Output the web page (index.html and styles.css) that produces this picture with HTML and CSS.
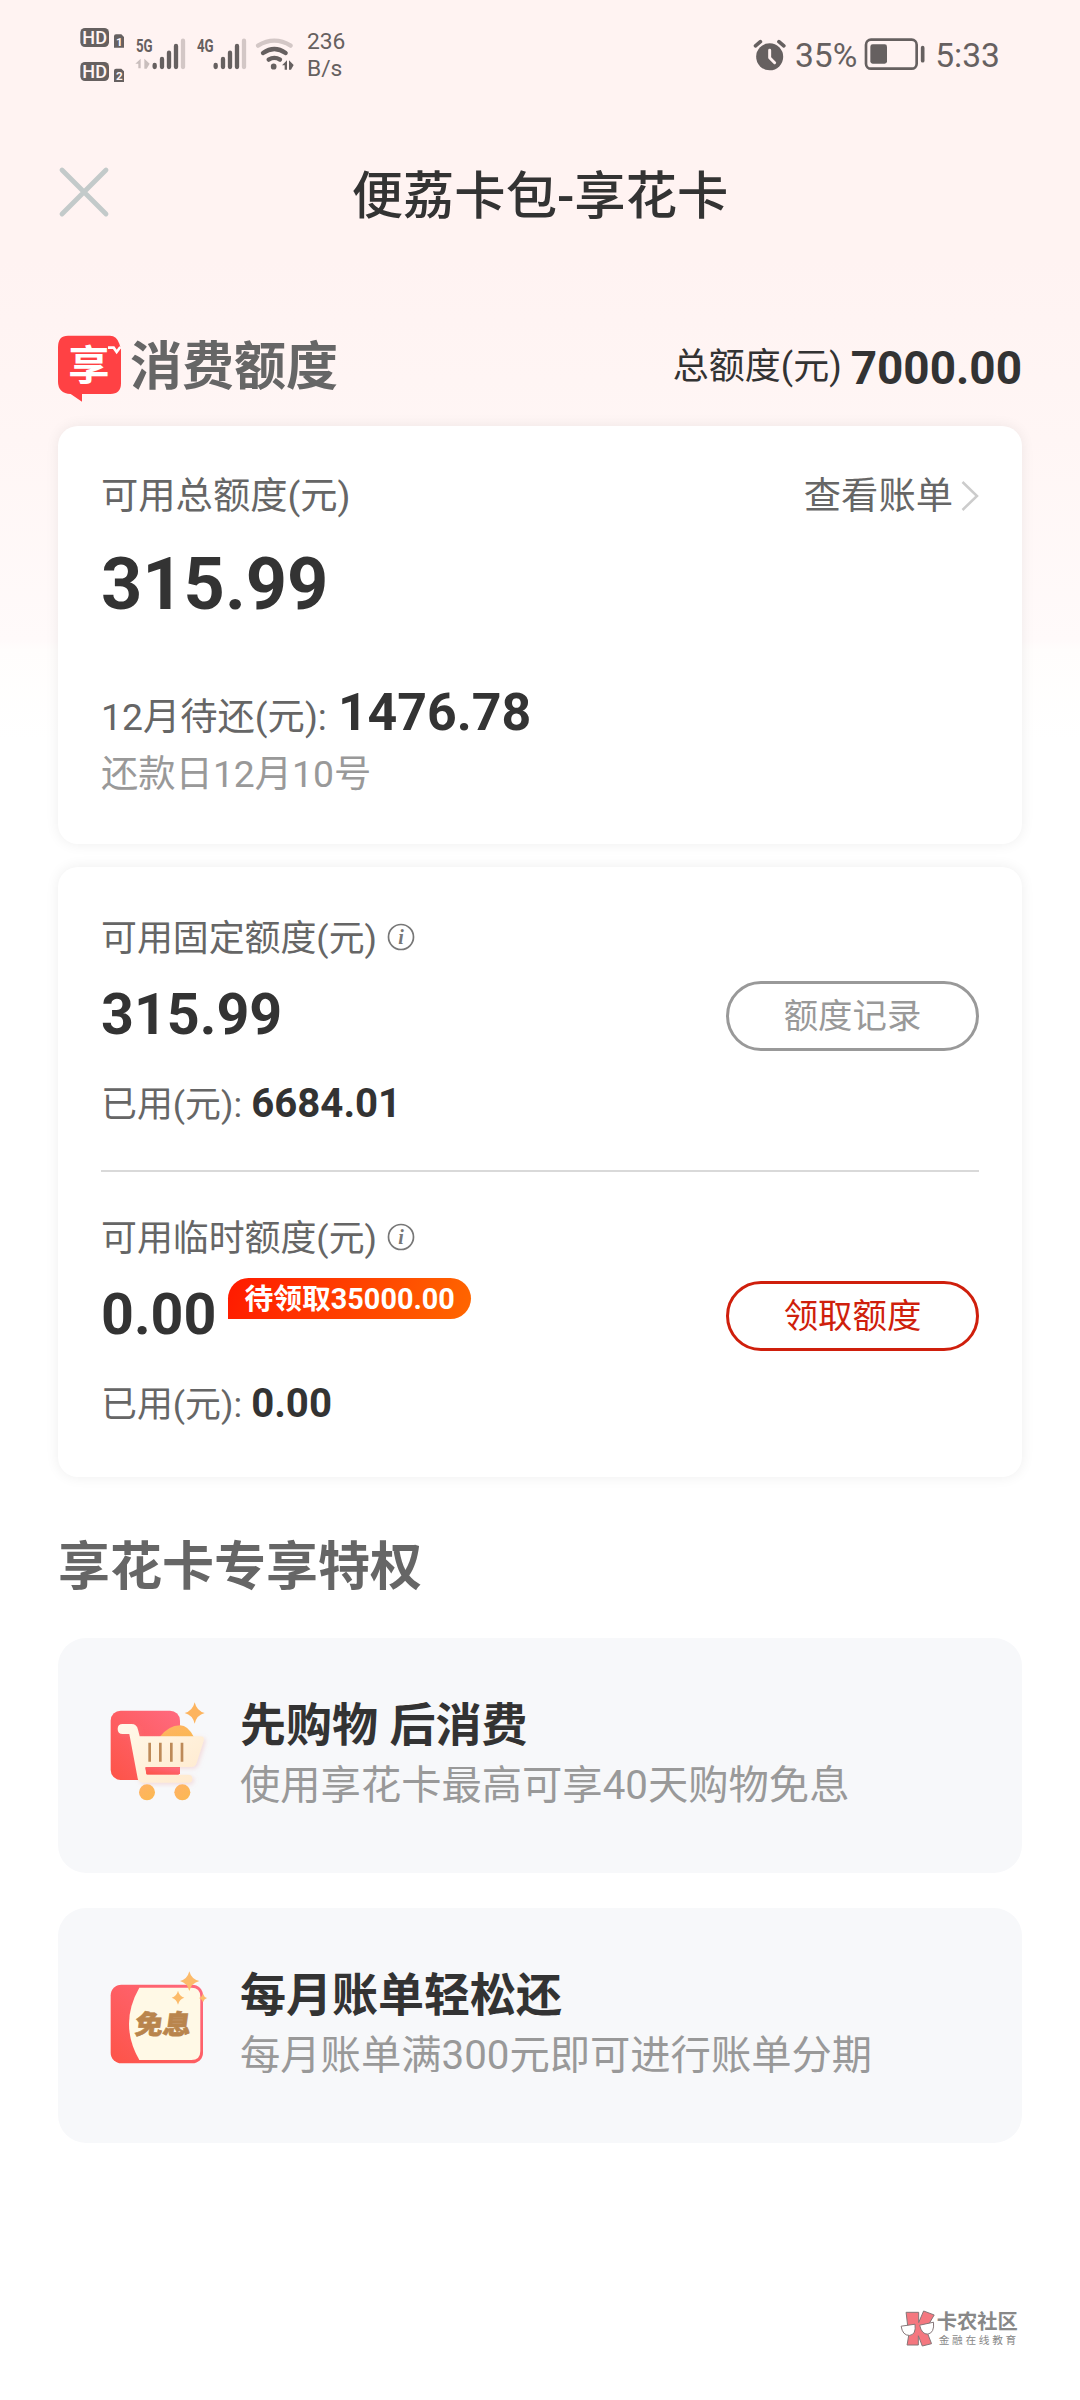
FILE: index.html
```html
<!DOCTYPE html>
<html lang="zh-CN">
<head>
<meta charset="utf-8">
<title>便荔卡包-享花卡</title>
<link rel="stylesheet" href="styles.css">
</head>
<body>
<div class="screen">
  <div class="status">
    <svg class="signals" viewBox="0 0 720 270" aria-hidden="true">
      <g fill="#666060">
        <rect x="61" y="54" width="86" height="57" rx="14"/>
        <rect x="61" y="156" width="86" height="57" rx="14"/>
        <path d="M168 73h16l8 8v32h-30V79q0-6 6-6zM168 176h16l8 8v32h-30v-34q0-6 6-6z"/>
        <text class="net" x="228" y="125" textLength="50" lengthAdjust="spacingAndGlyphs">5G</text>
        <text class="net" x="411" y="125" textLength="50" lengthAdjust="spacingAndGlyphs">4G</text>
      </g>
      <g class="hd" fill="#fff4f3">
        <text x="67" y="101" textLength="74" lengthAdjust="spacingAndGlyphs">HD</text>
        <text x="67" y="203" textLength="74" lengthAdjust="spacingAndGlyphs">HD</text>
        <text class="sim" x="168" y="107">1</text>
        <text class="sim" x="168" y="210">2</text>
      </g>
      <g fill="none" stroke="#666060" stroke-width="13" stroke-linecap="round">
        <path d="M284 165v6M306 147v24M327 128v43M348 108v63"/>
        <path d="M467 165v6M489 147v24M510 128v43M531 108v63"/>
        <path d="M369 92v79M552 92v79" stroke="#d3c7c6"/>
        <path d="M594 107q49-30 98 0" stroke="#d3c7c6"/>
        <path d="M609 129q34-24 68 0M626 149q17-11 34 0"/>
        <path d="M641 169v1" stroke-width="17"/>
      </g>
      <path fill="#c9bebd" d="M242 146v29h-7v-14h-9zM253 146l16 15-9 15h-7z"/>
      <path fill="#666060" d="M681 151v28h-7v-13h-8zM687 151l14 14-8 14h-6z"/>
    </svg>
    <div class="speed">236<br>B/s</div>
    <svg class="alarm" viewBox="70 50 102 100" aria-hidden="true">
      <circle cx="120" cy="107" r="41" fill="#666060"/>
      <path d="M77 74l15-13M163 74l-15-13" stroke="#666060" stroke-width="11" stroke-linecap="round"/>
      <path d="M120 87v23l15 15" fill="none" stroke="#fff2f1" stroke-width="9" stroke-linecap="round" stroke-linejoin="round"/>
    </svg>
    <span class="clock percent">35%</span>
    <svg class="battery" viewBox="402 52 186 102" aria-hidden="true">
      <rect x="408" y="60" width="152" height="87" rx="15" fill="none" stroke="#666060" stroke-width="8"/>
      <rect x="421" y="74" width="50" height="58" rx="7" fill="#666060"/>
      <path d="M578 84v39" stroke="#666060" stroke-width="11" stroke-linecap="round"/>
    </svg>
    <span class="clock">5:33</span>
  </div>

  <header class="header">
    <svg class="close" viewBox="0 0 52 52" aria-label="关闭"><path d="M4 4l44 44M48 4L4 48" stroke="#c3caca" stroke-width="4.8" stroke-linecap="round"/></svg>
    <h1 class="title">便荔卡包-享花卡</h1>
  </header>

  <main class="content">
    <div class="summary">
      <svg class="logo" viewBox="24 28 198 204" aria-hidden="true">
        <path fill="#ff4144" d="M54 30h126q20 0 28 24l5 17v102q0 32-32 32H96v23L62 205Q24 202 24 168V64q0-34 30-34z"/>
        <text class="logo-text" x="55" y="163">享</text>
        <path d="M174 66h17l9 13 11-15" fill="none" stroke="#fff" stroke-width="8"/>
      </svg>
      <h2 class="section-title">消费额度</h2>
      <span class="total-label">总额度(元)</span>
      <strong class="total-value">7000.00</strong>
    </div>

    <section class="card available">
      <div class="row label-row">
        <span>可用总额度(元)</span>
        <a class="bill">查看账单<svg class="chevron" viewBox="0 0 18 32" aria-hidden="true"><path d="M1.5 2L16 16 1.5 30" fill="none" stroke="#ccc" stroke-width="2.5"/></svg></a>
      </div>
      <div class="amount-xl">315.99</div>
      <div class="due"><span>12月待还(元):</span><strong>1476.78</strong></div>
      <div class="due-date">还款日12月10号</div>
    </section>

    <section class="card limits">
      <div class="limit">
        <div class="limit-label">可用固定额度(元)<svg class="info" viewBox="0 0 28 28" aria-hidden="true"><circle cx="14" cy="14" r="12.5" fill="none" stroke="#777" stroke-width="1.7"/><text x="14" y="21">i</text></svg></div>
        <div class="row limit-main">
          <span class="amount-lg">315.99</span>
          <button class="pill">额度记录</button>
        </div>
        <div class="used"><span>已用(元):</span><strong>6684.01</strong></div>
      </div>
      <div class="limit">
        <div class="limit-label">可用临时额度(元)<svg class="info" viewBox="0 0 28 28" aria-hidden="true"><circle cx="14" cy="14" r="12.5" fill="none" stroke="#777" stroke-width="1.7"/><text x="14" y="21">i</text></svg></div>
        <div class="row limit-main">
          <span class="amount-lg">0.00</span>
          <span class="badge">待领取35000.00</span>
          <button class="pill primary">领取额度</button>
        </div>
        <div class="used"><span>已用(元):</span><strong>0.00</strong></div>
      </div>
    </section>

    <h2 class="section-title perks-title">享花卡专享特权</h2>

    <section class="perk">
      <svg class="perk-icon" viewBox="30 36 330 360" aria-hidden="true">
        <defs>
          <linearGradient id="red" x1="1" y1="0" x2="0" y2="1"><stop offset="0" stop-color="#ff6a80"/><stop offset="1" stop-color="#fd5347"/></linearGradient>
          <linearGradient id="cream" x1="0" y1="0" x2="1" y2="1"><stop offset="0" stop-color="#fff9ea"/><stop offset="1" stop-color="#ffe9cd"/></linearGradient>
          <linearGradient id="gold" x1="0" y1="0" x2="1" y2="1"><stop offset="0" stop-color="#ffb266"/><stop offset="1" stop-color="#fbb950"/></linearGradient>
          <filter id="soft" x="-20%" y="-20%" width="150%" height="150%"><feDropShadow dx="5" dy="5" stdDeviation="6" flood-color="#e88c8c" flood-opacity=".28"/></filter>
        </defs>
        <rect x="62" y="92" width="208" height="208" rx="30" fill="url(#red)"/>
        <path d="M208 172q28-36 62-36 24 0 42 36z" fill="url(#gold)"/>
        <g filter="url(#soft)">
          <path fill="url(#cream)" d="M98 132h26q17 0 20 17l5 20h182q14 0 10 13l-21 66q-4 13-17 13H166l4 23h125q12 0 12 12t-12 12H160q-15 0-17-13L118 162H98q-15 0-15-15t15-15z"/>
        </g>
        <path d="M166 263h104v19H169z" fill="url(#red)"/>
        <path d="M179 188v57M211 188v57M244 188v57M276 188v57" stroke="#bd8a58" stroke-width="8"/>
        <circle cx="171" cy="337" r="24" fill="url(#gold)"/><circle cx="277" cy="337" r="24" fill="url(#gold)"/>
        <path fill="#fdb45e" d="M314 67q6 26 30 32-24 6-30 32-6-26-30-32 24-6 30-32z"/>
      </svg>
      <div class="perk-body"><h3>先购物 后消费</h3><p>使用享花卡最高可享40天购物免息</p></div>
    </section>

    <section class="perk">
      <svg class="perk-icon" viewBox="30 36 330 360" aria-hidden="true">
        <rect x="62" y="104" width="277" height="236" rx="32" fill="url(#red)"/>
        <path fill="#fff9e6" d="M148 113h156q27 0 27 27v163q0 27-27 27H148q-31-53-31-108t31-109z"/>
        <text class="free" transform="translate(132 253) skewX(-8)" textLength="168" lengthAdjust="spacingAndGlyphs">免息</text>
        <g fill="#fcbb6a">
          <path d="M298 64q6 24 30 29-24 6-30 30-6-24-28-30 22-5 28-29z"/>
          <path d="M264 122q4 17 19 21-15 4-19 21-4-17-19-21 15-4 19-21z"/>
          <path d="M339 131q3 10 12 13-9 3-12 13-3-10-12-13 9-3 12-13z"/>
        </g>
      </svg>
      <div class="perk-body"><h3>每月账单轻松还</h3><p>每月账单满300元即可进行账单分期</p></div>
    </section>
  </main>

  <footer class="brand">
    <svg class="brand-logo" viewBox="58 66 108 112" aria-hidden="true">
      <path fill="#f4777f" stroke="#857577" stroke-width="3" d="M76 73h38v31l15-35 32 12-25 43 17 44-28 7-12-31v28H79l5-30z"/>
      <path fill="#fff" stroke="#857577" stroke-width="3" d="M61 115l42-6q4 32-17 34-21 0-25-28zM117 112l42-9q3 32-17 36-19 1-25-27z"/>
    </svg>
    <div class="brand-text"><b>卡农社区</b><span>金融在线教育</span></div>
  </footer>
</div>
</body>
</html>
```
FILE: styles.css
```css
* { box-sizing: border-box; }

body {
  margin: 0;
  font-family: Roboto, "Noto Sans CJK SC", sans-serif;
  color: #333;
  background: #fff;
}

h1, h2, h3, p { margin: 0; }
svg { display: block; flex: none; }

.screen {
  display: flex;
  flex-direction: column;
  width: 1080px;
  height: 2400px;
  background: linear-gradient(#fff3f2 0, #fff3f2 260px, #fff6f5 440px, #fffafa 640px, #fffdfc 650px, #fff 740px);
}

/* status bar */
.status {
  display: flex;
  align-items: center;
  height: 108px;
  padding: 0 80px 0 60px;
  color: #666060;
}
.signals { width: 240px; height: 90px; margin-top: 2px; }
.net { font-size: 54px; font-weight: 700; }
.hd { font-size: 54px; font-weight: 500; }
.hd .sim { font-size: 35px; font-weight: 700; }
.speed { width: 60px; margin: 1px auto 0 7px; font-size: 22.8px; line-height: 27px; }
.alarm { width: 34px; height: 33px; }
.clock { font-size: 33.6px; line-height: 40px; padding-top: 3px; }
.percent { margin: 0 7px 0 8px; }
.battery { width: 62px; height: 34px; margin-right: 9px; }

/* page header */
.header {
  display: grid;
  grid-template-columns: 52px 1fr 52px;
  height: 80px;
  margin: 48px 58px 0;
}
.close { width: 52px; height: 52px; margin-top: 10px; }
.title {
  padding-top: 1px;
  font-size: 51.3px;
  line-height: 80px;
  font-weight: 500;
  text-align: center;
}

.content { padding: 100px 58px 0; }

.summary { display: flex; align-items: center; height: 64px; }
.logo { width: 66px; height: 68px; margin-top: 2px; }
.logo-text { font-size: 124px; font-weight: 700; fill: #fff; }
.section-title {
  font-size: 52px;
  line-height: 60px;
  font-weight: 700;
  color: #666;
}
.summary .section-title { margin-left: 6px; }
.total-label { margin-left: auto; font-size: 36px; line-height: 50px; padding-bottom: 2px; }
.total-value { margin-left: 9px; font-size: 45.9px; line-height: 60px; }

/* cards */
.card {
  padding: 0 43px;
  border-radius: 20px;
  background: #fff;
  box-shadow: 0 0 14px rgba(0, 0, 0, .07);
}
.row { display: flex; align-items: center; }

.available {
  height: 418px;
  margin-top: 26px;
  padding-top: 45px;
  font-size: 37.3px;
  line-height: 50px;
  color: #666;
}
.label-row { justify-content: space-between; }
.bill { display: flex; align-items: center; gap: 8px; }
.chevron { width: 18px; height: 32px; }
.amount-xl { margin-top: 24px; font-size: 72px; line-height: 80px; font-weight: 700; color: #333; }
.due { display: flex; align-items: baseline; margin-top: 58px; height: 66px; }
.due strong { margin-left: 11px; font-size: 51.8px; line-height: 60px; color: #333; }
.due-date { color: #999; }

.limits { height: 610px; margin-top: 23px; }
.limit { padding-top: 42px; font-size: 35.9px; line-height: 50px; color: #666; }
.limit:first-child { height: 305px; padding-top: 47px; border-bottom: 2px solid #d9d9d9; }
.limit-label { display: flex; align-items: center; gap: 10px; }
.info { width: 28px; height: 28px; margin-top: -5px; }
.info text { font: italic 700 20px "Liberation Serif", serif; fill: #777; text-anchor: middle; }
.limit-main { height: 70px; margin-top: 17px; }
.amount-lg { font-size: 57.4px; line-height: 68px; padding-bottom: 2px; font-weight: 700; color: #333; }
.badge {
  align-self: flex-start;
  height: 41px;
  margin: -3px 0 0 12px;
  padding: 1px 16px 0;
  border-radius: 21px 21px 21px 0;
  background: linear-gradient(110deg, #ff1a00, #ff6700);
  color: #fff;
  font-size: 28.8px;
  line-height: 41px;
  font-weight: 700;
}
.pill {
  width: 253px;
  height: 70px;
  margin-left: auto;
  padding: 0 0 7px;
  border: 3px solid #999;
  border-radius: 35px;
  background: #fff;
  color: #999;
  font: 34.4px Roboto, "Noto Sans CJK SC", sans-serif;
}
.pill.primary { border-color: #cf1f0c; color: #cf1f0c; }
.used { display: flex; align-items: baseline; margin-top: 28px; }
.used strong { margin-left: 9px; font-size: 40.2px; color: #333; }

/* perks */
.perks-title { margin-top: 61px; }
.perk {
  display: flex;
  height: 235px;
  margin-top: 35px;
  padding: 54px 42px 0;
  border-radius: 28px;
  background: #f7f8fa;
}
.perks-title + .perk { margin-top: 40px; }
.perk-icon { width: 110px; height: 120px; }
.perk-body { margin: 5px 0 0 30px; }
.perk h3 { font-size: 46px; line-height: 56px; font-weight: 700; }
.perk p { margin-top: 8px; font-size: 40.3px; line-height: 50px; color: #999; }
.free { font-size: 80px; font-weight: 900; fill: #b9854d; stroke: #b9854d; stroke-width: 2; }

/* brand mark */
.brand { display: flex; align-self: flex-end; margin: auto 61px 52px 0; gap: 1px; }
.brand-logo { width: 36px; height: 37px; }
.brand-text { display: flex; flex-direction: column; color: #888; }
.brand b { font-size: 20.3px; line-height: 24px; }
.brand span { padding-left: 2px; font-size: 10.7px; line-height: 14px; letter-spacing: 2.7px; }
```
